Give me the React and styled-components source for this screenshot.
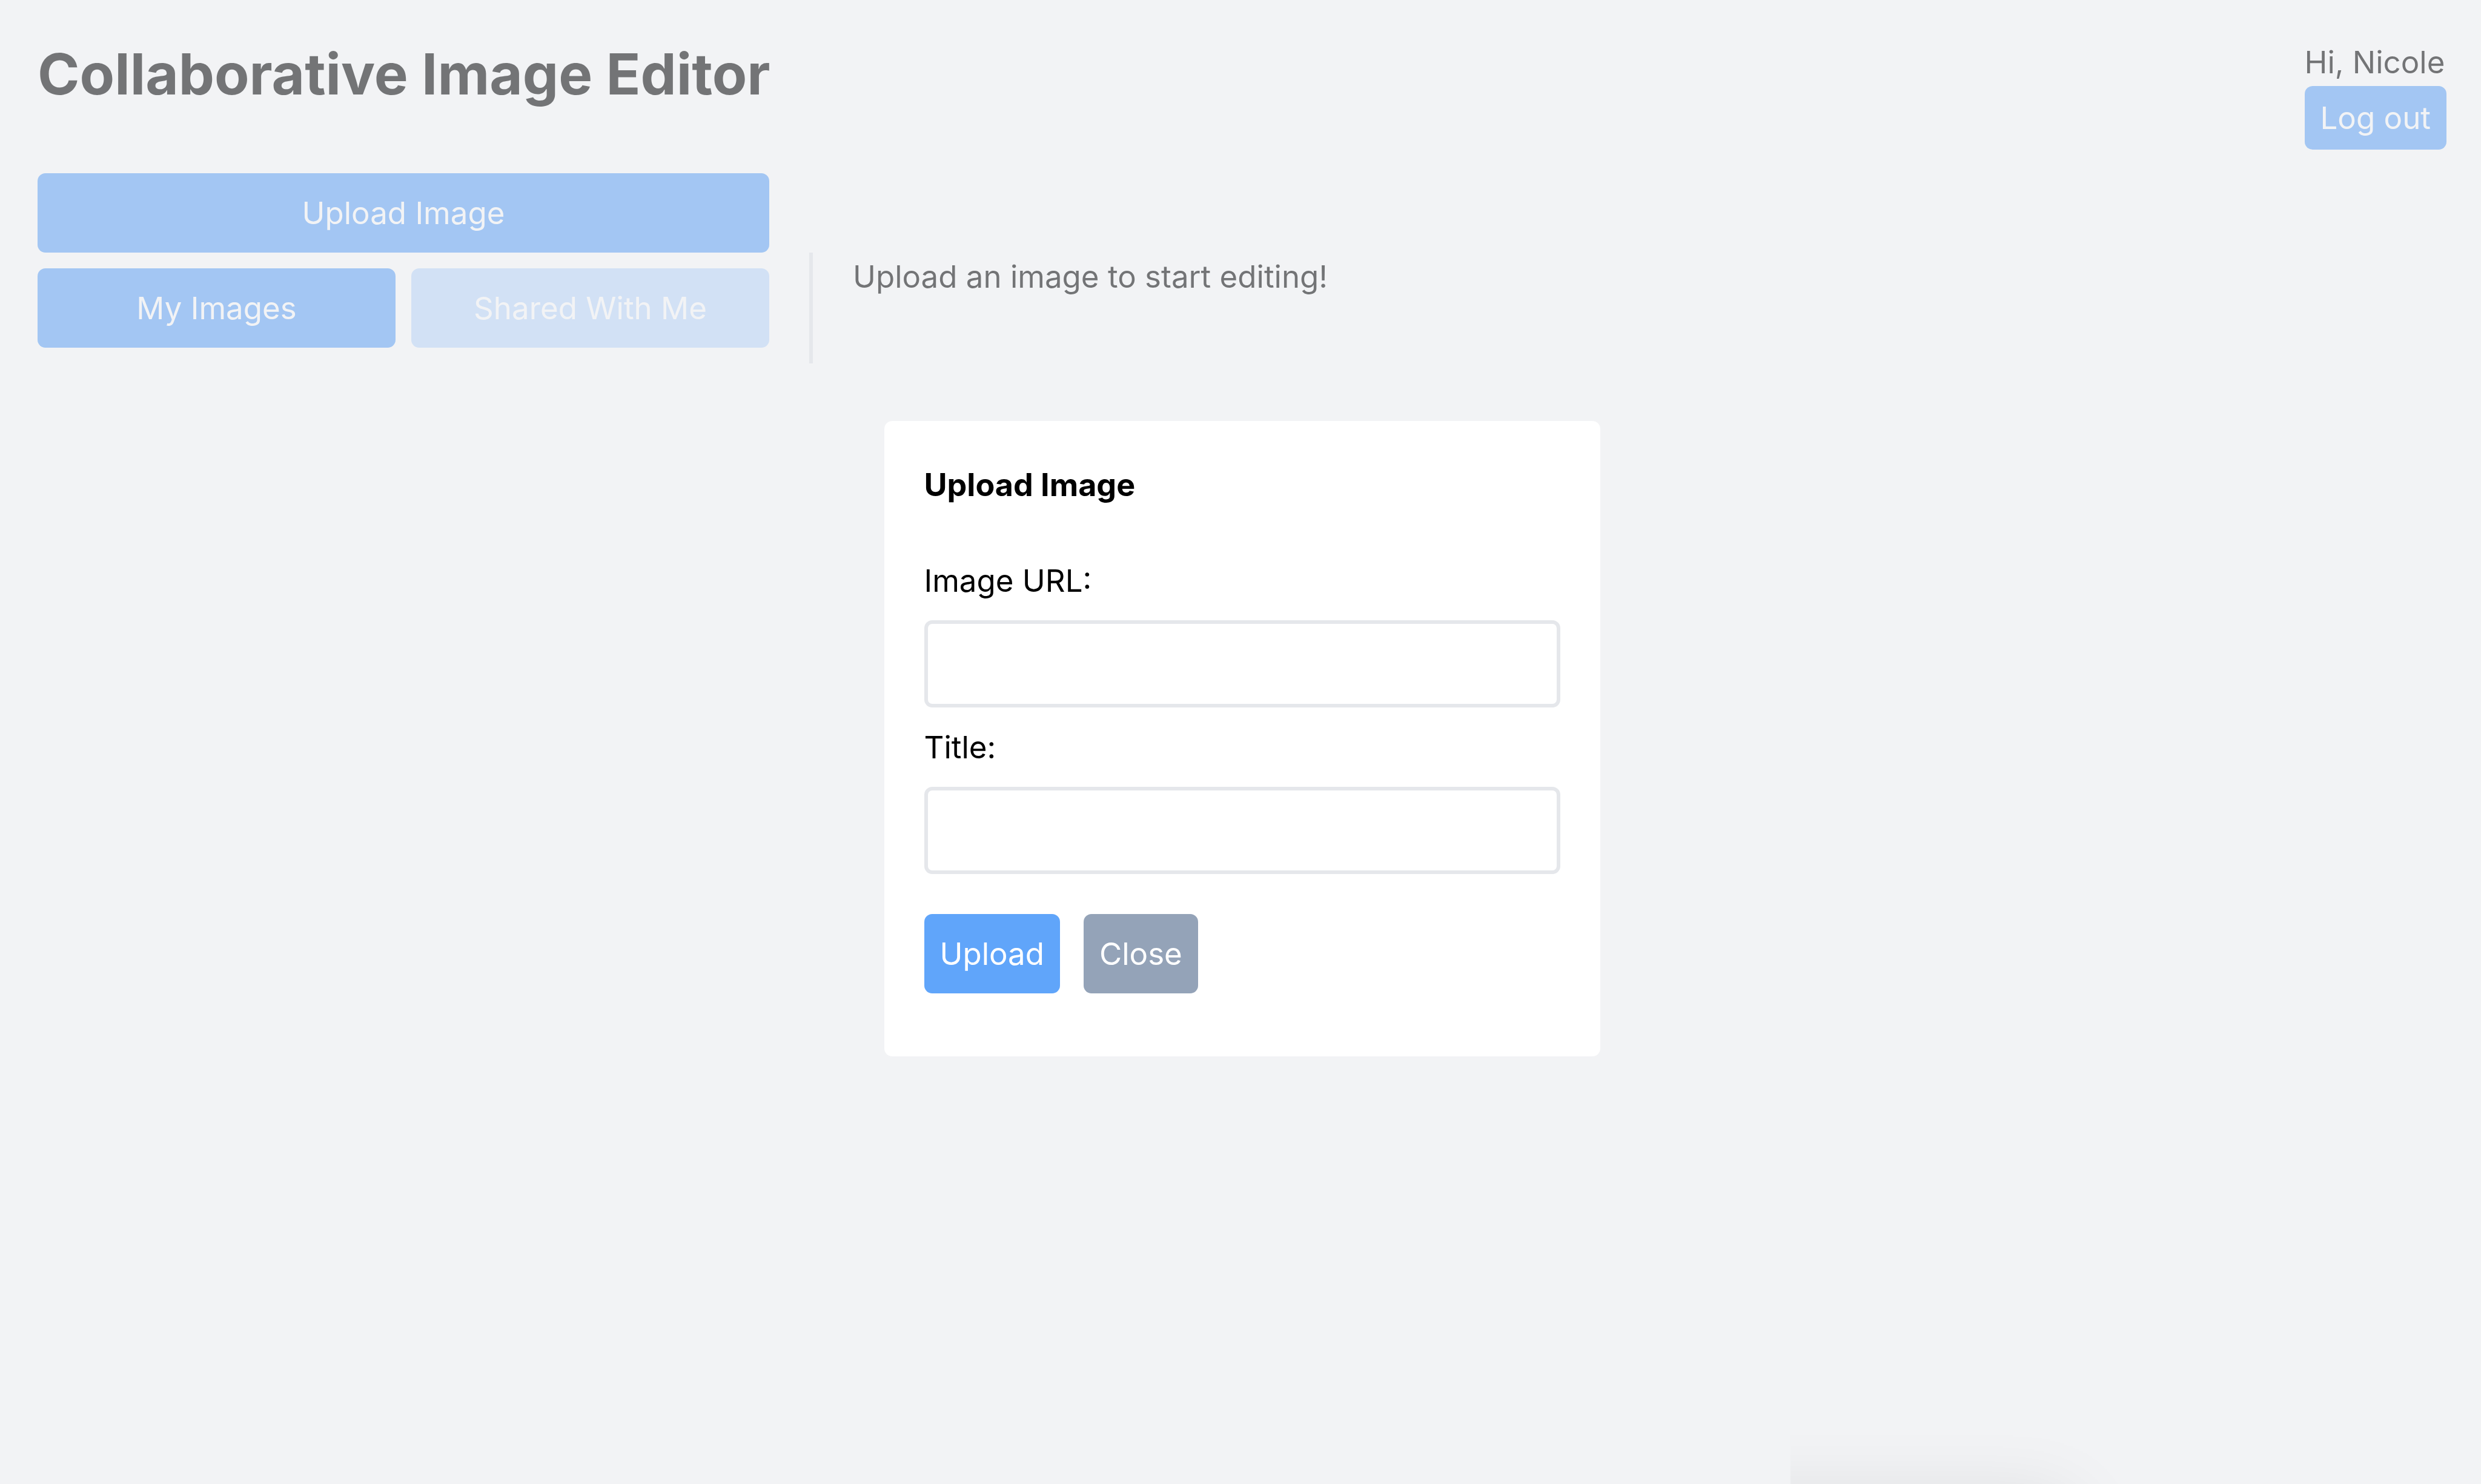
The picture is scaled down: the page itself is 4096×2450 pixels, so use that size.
import React from "react";
import styled, { createGlobalStyle } from "styled-components";

const GlobalStyle = createGlobalStyle`
  *, *::before, *::after { box-sizing: border-box; }
  body {
    margin: 0;
    background: #ffffff;
    color: #000000;
    font-family: Inter, "Liberation Sans", sans-serif;
    font-size: 51px;
    line-height: 79px;
  }
  button, input { font: inherit; }
`;

const Page = styled.div`
  min-height: 100vh;
  padding: 63px 57px 0 62px;
`;

const Header = styled.header`
  display: flex;
  justify-content: space-between;
  align-items: flex-start;
  margin-bottom: 39px;
`;

const Heading = styled.h1`
  margin: 0;
  font-size: 94px;
  line-height: 118px;
  font-weight: 700;
`;

const Account = styled.div`
  display: flex;
  flex-direction: column;
`;

const colors = {
  primary: "#60a5fa",
  faded: "#bfdbfe",
  muted: "#94a3b8",
};

const Button = styled.button`
  padding: ${(p) => (p.$compact ? "13px" : "26px")} 26px;
  border: 0;
  border-radius: 13px;
  background: ${(p) => colors[p.$tone || "primary"]};
  color: #ffffff;
  cursor: pointer;
  white-space: nowrap;
`;

const SidebarTop = styled.div`
  display: grid;
  width: 1208px;
  max-width: 100%;
`;

const Workspace = styled.div`
  display: flex;
  gap: 66px;
`;

const Tabs = styled.nav`
  display: grid;
  grid-template-columns: 1fr 1fr;
  gap: 26px;
  width: 1208px;
  padding: 26px 0;
`;

const Canvas = styled.main`
  flex: 1;
  padding-left: 66px;
  border-left: 6px solid #e5e7eb;
`;

const Message = styled.p`
  margin: 0;
`;

const Overlay = styled.div`
  position: fixed;
  inset: 0;
  display: flex;
  align-items: center;
  justify-content: center;
  padding: 0 57px 12px 62px;
  background: rgba(229, 231, 235, 0.5);
`;

const Dialog = styled.form`
  display: flex;
  flex-direction: column;
  width: 1182px;
  max-width: 100%;
  padding: 66px 66px 104px;
  border-radius: 13px;
  background: #ffffff;
`;

const DialogTitle = styled.h2`
  margin: 0 0 79px;
  font-size: 52px;
  line-height: 79px;
  font-weight: 700;
`;

const Fields = styled.div`
  display: grid;
  gap: 26px;
  margin-bottom: 66px;
`;

const Field = styled.div`
  display: grid;
  gap: 26px;
`;

const TextInput = styled.input`
  width: 100%;
  height: 144px;
  padding: 26px;
  border: 6px solid #e5e7eb;
  border-radius: 13px;
  background: #ffffff;
  outline: none;
`;

const Actions = styled.div`
  display: flex;
  gap: 39px;
`;

const CornerShade = styled.div`
  position: fixed;
  right: 0;
  bottom: 0;
  width: 1140px;
  height: 160px;
  overflow: hidden;
  pointer-events: none;

  &::after {
    content: "";
    position: absolute;
    top: 190px;
    left: -400px;
    right: 678px;
    height: 400px;
    box-shadow: 0 0 120px rgba(0, 0, 0, 0.11);
  }
`;

export default function App() {
  return (
    <>
      <GlobalStyle />
      <Page>
        <Header>
          <Heading>Collaborative Image Editor</Heading>
          <Account>
            <span>Hi, Nicole</span>
            <Button type="button" $compact>Log out</Button>
          </Account>
        </Header>
        <SidebarTop>
          <Button type="button">Upload Image</Button>
        </SidebarTop>
        <Workspace>
          <Tabs>
            <Button type="button">My Images</Button>
            <Button type="button" $tone="faded">Shared With Me</Button>
          </Tabs>
          <Canvas>
            <Message>Upload an image to start editing!</Message>
          </Canvas>
        </Workspace>
      </Page>
      <Overlay>
        <Dialog
          role="dialog"
          aria-labelledby="upload-title"
          onSubmit={(event) => event.preventDefault()}
        >
          <DialogTitle id="upload-title">Upload Image</DialogTitle>
          <Fields>
            <Field>
              <label htmlFor="image-url">Image URL:</label>
              <TextInput id="image-url" type="text" />
            </Field>
            <Field>
              <label htmlFor="image-title">Title:</label>
              <TextInput id="image-title" type="text" />
            </Field>
          </Fields>
          <Actions>
            <Button type="submit">Upload</Button>
            <Button type="button" $tone="muted">Close</Button>
          </Actions>
        </Dialog>
      </Overlay>
      <CornerShade />
    </>
  );
}
